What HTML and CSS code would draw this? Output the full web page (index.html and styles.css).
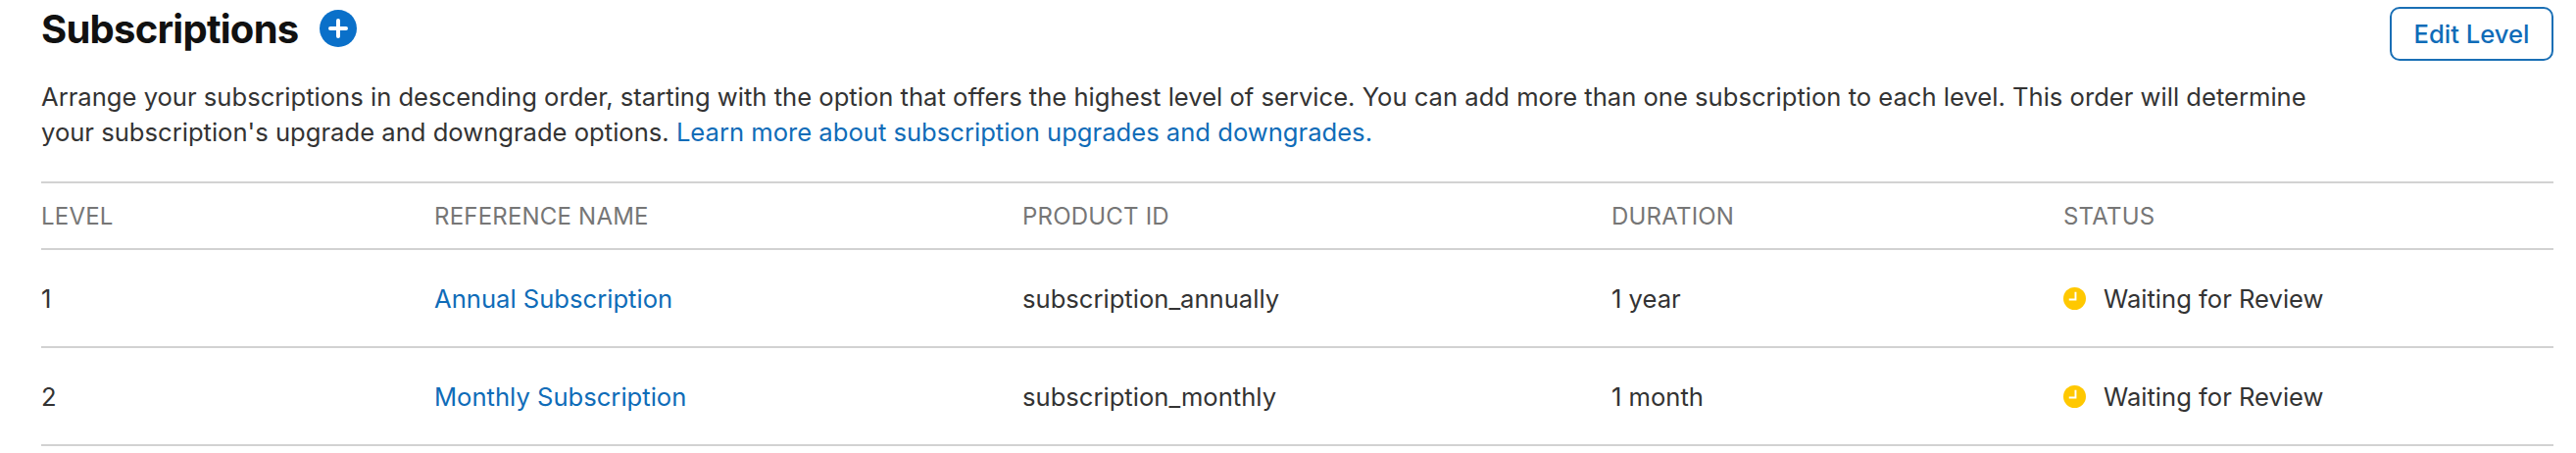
FILE: index.html
```html
<!DOCTYPE html>
<html lang="en">
<head>
<meta charset="utf-8">
<title>Subscriptions</title>
<link rel="stylesheet" href="styles.css">
</head>
<body>
<main class="page">
  <header class="head">
    <div class="title-wrap">
      <h2 class="title">Subscriptions</h2>
      <svg class="add" viewBox="0 0 38 38" aria-label="Add"><circle cx="19" cy="19" r="19" fill="#0a70c9"/><path d="M19 11v16M11 19h16" stroke="#fff" stroke-width="4" stroke-linecap="round"/></svg>
    </div>
    <button class="edit">Edit Level</button>
  </header>
  <p class="intro">Arrange your subscriptions in descending order, starting with the option that offers the highest level of service. You can add more than one subscription to each level. This order will determine your subscription's upgrade and downgrade options. <a class="link" href="#">Learn more about subscription upgrades and downgrades.</a></p>
  <div class="table">
    <div class="row row-head">
      <div>LEVEL</div><div>REFERENCE NAME</div><div>PRODUCT ID</div><div>DURATION</div><div>STATUS</div>
    </div>
    <div class="row">
      <div>1</div><div><a class="link" href="#">Annual Subscription</a></div><div>subscription_annually</div><div>1 year</div>
      <div class="status"><svg class="clock" viewBox="0 0 24 24"><circle cx="12" cy="12" r="12" fill="#ffc800"/><path d="M13 5v8H6" fill="none" stroke="#fff" stroke-width="2"/></svg>Waiting for Review</div>
    </div>
    <div class="row">
      <div>2</div><div><a class="link" href="#">Monthly Subscription</a></div><div>subscription_monthly</div><div>1 month</div>
      <div class="status"><svg class="clock" viewBox="0 0 24 24"><circle cx="12" cy="12" r="12" fill="#ffc800"/><path d="M13 5v8H6" fill="none" stroke="#fff" stroke-width="2"/></svg>Waiting for Review</div>
    </div>
  </div>
</main>
</body>
</html>
```
FILE: styles.css
```css
* { box-sizing: border-box; }
html, body { margin: 0; background: #fff; }
body { font-family: Inter, "Liberation Sans", sans-serif; color: #333; font-size: 25.6px; }
.page { width: 2628px; height: 462px; padding: 7px 23px 0 42px; overflow: hidden; }
.head { display: flex; justify-content: space-between; align-items: flex-start; height: 70px; }
.title-wrap { display: flex; align-items: flex-start; gap: 22px; height: 50px; }
.title { margin: -2px 0 0; font-size: 40px; line-height: 50px; font-weight: 700; color: #111; letter-spacing: -0.75px; }
.add { width: 38px; height: 38px; margin-top: 3px; }
.edit { width: 167px; height: 55px; border: 2px solid #1a6fb5; border-radius: 10px; background: #fff; color: #0f6cb8; font: 500 25.6px Inter, "Liberation Sans", sans-serif; padding: 0; }
.intro { margin: 0; width: 2340px; height: 108px; padding-top: 4px; line-height: 36px; }
.link { color: #0f6cb8; text-decoration: none; }
.table { border-top: 2px solid #d2d2d2; }
.row { display: grid; grid-template-columns: 401px 600px 601px 461px 500px; align-items: center; height: 100px; border-bottom: 2px solid #d2d2d2; }
.row-head { height: 68px; color: #767676; font-size: 24px; letter-spacing: 0.2px; }
.status { display: flex; align-items: center; gap: 18px; }
.clock { width: 23px; height: 23px; flex: none; }
```
